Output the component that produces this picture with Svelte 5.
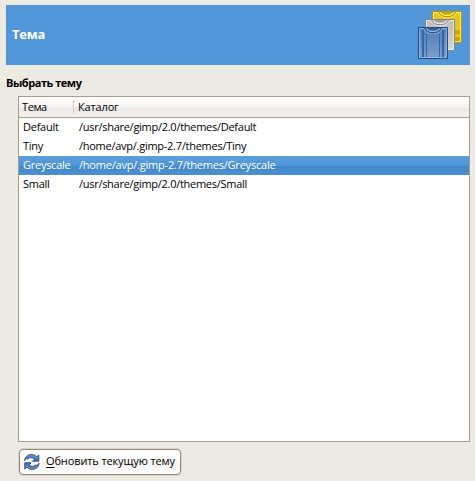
<script>
  const themes = [
    { name: 'Default', folder: '/usr/share/gimp/2.0/themes/Default', spacing: -0.27 },
    { name: 'Tiny', folder: '/home/avp/.gimp-2.7/themes/Tiny', spacing: -0.26 },
    { name: 'Greyscale', folder: '/home/avp/.gimp-2.7/themes/Greyscale', spacing: -0.21 },
    { name: 'Small', folder: '/usr/share/gimp/2.0/themes/Small', spacing: -0.28 }
  ];
  let selected = $state('Greyscale');
</script>

{#snippet shirt(x, y, fill, edge, light)}
  <g transform="translate({x} {y})">
    <path d="M.5 .5H8C9 3 21 3 22 .5H29.5V31.5H.5Z" fill={fill} stroke={edge} />
    <path d="M5.500 1.5H1.5V30.5H28.5V1.5H24.500" fill="none" stroke={light} stroke-opacity=".8" />
    <path d="M5.5 1C6.500 8.800 23.500 8.800 24.5 1" fill="none" stroke={light} stroke-opacity=".65" />
    <path d="M6.5 .5C8 7.500 22 7.500 23.5 .5Z" fill={fill} stroke={edge} />
    <path d="M8 1.5C10 5.500 20 5.500 22 1.5" fill="none" stroke={light} stroke-opacity=".8" />
    <path d="M9 .5C11 3.700 19 3.700 21 .5Z" fill={edge} fill-opacity=".5" stroke={edge} stroke-width=".8" />
  </g>
{/snippet}

<main>
  <header>
    <h1>Тема</h1>
    <svg class="shirts" width="48" height="50" viewBox="0 0 48 50">
      <defs>
        <linearGradient id="blue" x1="0" y1="0" x2="0" y2="1"><stop stop-color="#4c7db9" /><stop offset="1" stop-color="#7f9fca" /></linearGradient>
        <linearGradient id="gray" x1="0" y1="0" x2="0" y2="1"><stop stop-color="#bcbdb8" /><stop offset="1" stop-color="#d5d5d2" /></linearGradient>
      </defs>
      {@render shirt(14, 1, '#e3c825', '#b99500', '#fff27a')}
      <path d="M37 20h5v4h-5zM37 27h5v4h-5z" fill="#c9a500" />
      {@render shirt(7, 9, 'url(#gray)', '#858782', '#f3f3f1')}
      {@render shirt(0, 17, 'url(#blue)', '#204a87', '#9dbbe0')}
      <path d="M5 20V47M25 20V47" stroke="#3565a4" stroke-width="2" />
      <path d="M8.500 24V47M21.500 24V47" stroke="#3565a4" />
    </svg>
  </header>

  <h2>Выбрать тему</h2>

  <div class="list">
    <div class="columns"><span class="first">Тема</span><span class="second">Каталог</span></div>
    {#each themes as theme}
      <div class="row" class:selected={selected === theme.name} role="option" tabindex="-1" aria-selected={selected === theme.name}
        onclick={() => (selected = theme.name)} onkeydown={() => {}}>
        <span class="name">{theme.name}</span><span style:letter-spacing="{theme.spacing}px">{theme.folder}</span>
      </div>
    {/each}
  </div>

  <button>
    <svg width="16" height="16" viewBox="0 0 16 16">
      <g id="arrow">
        <path d="M.6 6.700C1 3 3.700 .6 7.300 .6C9.800 .6 11.500 1.500 12.700 2.900L14.800 1V7.200H8.500L10.500 5.200C8.300 3.100 5.500 3.100 3.900 5.100L2.300 4.500Z" fill="#4a77b0" stroke="#204a87" stroke-width=".9" />
        <path d="M2.600 3.600C5 1 9.500 .8 12.400 4.200L14 3" fill="none" stroke="#8fadd3" stroke-width=".7" />
      </g>
      <use href="#arrow" transform="rotate(180 7.800 8)" />
    </svg>
    <span><u>О</u>бновить текущую тему</span>
  </button>
</main>

<style>
  :global(body) { background: #edeae3; }
  main {
    box-sizing: border-box;
    width: 475px;
    height: 481px;
    padding: 5px 5px 0 6px;
    background: #edeae3;
    color: #000;
    font: 11px/19px "Open Sans", "Noto Sans", sans-serif;
    display: flex;
    flex-direction: column;
    overflow: hidden;
  }
  header {
    display: flex;
    justify-content: space-between;
    align-items: center;
    height: 60px;
    flex: none;
    padding: 0 4px 0 6px;
    box-sizing: border-box;
    background: #5297d8;
    color: #fff;
  }
  h1 { margin: 0; font-size: 13px; font-weight: 700; line-height: 18px; padding-bottom: 2px; letter-spacing: -.2px; }
  h2 { margin: 8px 0 4px; font-size: 11px; font-weight: 700; line-height: 19px; letter-spacing: -.46px; }
  .list {
    box-sizing: border-box;
    margin-left: 12px;
    width: 452px;
    height: 346px;
    flex: none;
    border: 1px solid #a89c88;
    background: #fff;
    white-space: nowrap;
  }
  .columns {
    display: flex;
    align-items: center;
    height: 20px;
    border-bottom: 1px solid #a89c88;
    background: linear-gradient(#fff, #f5f3f1 55%, #ece8e4 55%, #f3f0ee);
  }
  .columns span { height: 14px; line-height: 14px; }
  .first {
    box-sizing: border-box;
    width: 55px;
    padding-left: 3px;
    border-right: 1px solid #d3cdc3;
    letter-spacing: -.4px;
  }
  .second { padding-left: 4px; letter-spacing: -.15px; }
  .row { display: flex; height: 19px; line-height: 17px; }
  .name { box-sizing: border-box; width: 60px; padding-left: 4px; flex: none; letter-spacing: -.26px; }
  .selected { color: #fff; background: linear-gradient(#5a9fdd, #4f94d4 52%, #4287c9 52%, #4c90d1); }
  button {
    display: flex;
    align-items: center;
    gap: 6px;
    box-sizing: border-box;
    margin: 7px 0 0 13px;
    width: 162px;
    height: 26px;
    padding: 0 0 0 4px;
    border: 1px solid #968879;
    border-radius: 4px;
    background: linear-gradient(#fff, #fbfafa 50%, #f5f3f1 50%, #fcfbfb);
    box-shadow: 0 0 0 .5px #c9c2b8;
    color: #000;
    font: inherit;
    letter-spacing: -.12px;
    white-space: nowrap;
  }
  button svg { flex: none; }
  button span { line-height: 18px; padding-bottom: 3px; }
  u { text-underline-offset: 2px; }
</style>
